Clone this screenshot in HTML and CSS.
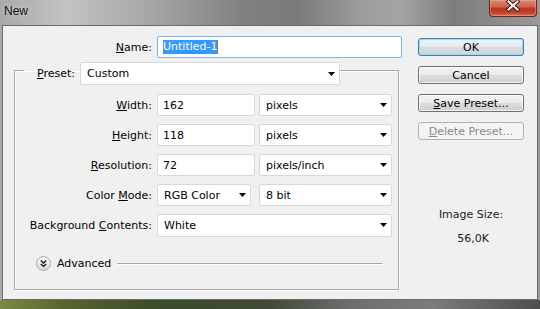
FILE: index.html
```html
<!DOCTYPE html>
<html>
<head>
<meta charset="utf-8">
<title>New</title>
<link rel="stylesheet" href="styles.css">
</head>
<body>
<div class="window">
  <div class="titlebar">
    <span class="title">New</span>
    <div class="close">
      <svg width="48" height="17" viewBox="0 0 48 17">
        <path d="M19.5 2.5 L28.5 10.5 M28.5 2.5 L19.5 10.5" stroke="#3b1710" stroke-width="4" stroke-linecap="square" fill="none"/>
        <path d="M19.5 2.5 L28.5 10.5 M28.5 2.5 L19.5 10.5" stroke="#ffffff" stroke-width="2" stroke-linecap="square" fill="none"/>
      </svg>
    </div>
  </div>
  <div class="client">
    <div class="form">
      <div class="row name-row">
        <span class="lbl name-lbl"><u>N</u>ame:</span>
        <div class="field name-field"><span class="sel">Untitled-1</span><span class="caret"></span></div>
      </div>
      <fieldset class="group">
        <legend class="legend">
          <span class="plbl"><u>P</u>reset:</span>
          <div class="dd preset"><span>Custom</span><svg class="arr" width="7" height="4" viewBox="0 0 7 4"><polygon points="0,0 7,0 3.5,4" fill="#000"/></svg></div>
        </legend>
        <div class="rows">
          <div class="row">
            <span class="lbl"><u>W</u>idth:</span>
            <div class="field num">162</div>
            <div class="dd unit"><span>pixels</span><svg class="arr" width="7" height="4" viewBox="0 0 7 4"><polygon points="0,0 7,0 3.5,4" fill="#000"/></svg></div>
          </div>
          <div class="row">
            <span class="lbl"><u>H</u>eight:</span>
            <div class="field num">118</div>
            <div class="dd unit"><span>pixels</span><svg class="arr" width="7" height="4" viewBox="0 0 7 4"><polygon points="0,0 7,0 3.5,4" fill="#000"/></svg></div>
          </div>
          <div class="row">
            <span class="lbl"><u>R</u>esolution:</span>
            <div class="field num">72</div>
            <div class="dd unit"><span>pixels/inch</span><svg class="arr" width="7" height="4" viewBox="0 0 7 4"><polygon points="0,0 7,0 3.5,4" fill="#000"/></svg></div>
          </div>
          <div class="row">
            <span class="lbl">Color <u>M</u>ode:</span>
            <div class="dd mode"><span>RGB Color</span><svg class="arr" width="7" height="4" viewBox="0 0 7 4"><polygon points="0,0 7,0 3.5,4" fill="#000"/></svg></div>
            <div class="dd unit bits"><span>8 bit</span><svg class="arr" width="7" height="4" viewBox="0 0 7 4"><polygon points="0,0 7,0 3.5,4" fill="#000"/></svg></div>
          </div>
          <div class="row">
            <span class="lbl">Background <u>C</u>ontents:</span>
            <div class="dd bg"><span>White</span><svg class="arr" width="7" height="4" viewBox="0 0 7 4"><polygon points="0,0 7,0 3.5,4" fill="#000"/></svg></div>
          </div>
        </div>
        <div class="adv">
          <svg class="adv-icon" width="15" height="15" viewBox="0 0 15 15">
            <defs>
              <linearGradient id="ag" x1="0" y1="0" x2="0" y2="1">
                <stop offset="0" stop-color="#ffffff"/>
                <stop offset="1" stop-color="#d6d6d6"/>
              </linearGradient>
            </defs>
            <circle cx="7.5" cy="7.5" r="7" fill="url(#ag)" stroke="#a9a9a9"/>
            <path d="M4.8 4.6 L7.5 7.1 L10.2 4.6 M4.8 7.9 L7.5 10.4 L10.2 7.9" stroke="#1a1a1a" stroke-width="1.4" fill="none"/>
          </svg>
          <span class="adv-text">Advanced</span>
          <span class="adv-line"></span>
        </div>
      </fieldset>
    </div>
    <div class="side">
      <div class="btn ok">OK</div>
      <div class="btn">Cancel</div>
      <div class="btn"><span><u>S</u>ave Preset...</span></div>
      <div class="btn disabled"><span><u>D</u>elete Preset...</span></div>
      <div class="info">
        <div class="info-label">Image Size:</div>
        <div class="info-value">56,0K</div>
      </div>
    </div>
  </div>
</div>
</body>
</html>
```

FILE: styles.css
```css
html, body {
  margin: 0;
  padding: 0;
}

body {
  width: 540px;
  height: 309px;
  overflow: hidden;
  font-family: "DejaVu Sans", sans-serif;
  font-size: 11px;
  color: #000;
  background: linear-gradient(to right, #7a8a40 0%, #56652e 12%, #3b4a2a 30%, #414b38 50%, #6e6e6e 65%, #7c7c7c 80%, #4e4e4e 100%);
}

.window {
  height: 300px;
  display: flex;
  flex-direction: column;
  background: linear-gradient(to right, #a9a9a9 0%, #c3c3c3 12%, #a6a6a6 28%, #818181 45%, #7a7a7a 55%, #9a9a9a 66%, #a5a5a5 74%, #7d7d7d 84%, #8b8b8b 92%, #9a9a9a 100%);
}

.titlebar {
  height: 25px;
  display: flex;
  align-items: flex-start;
  flex-shrink: 0;
}

.title {
  font-family: "Liberation Sans", sans-serif;
  font-size: 12px;
  line-height: 14px;
  padding: 4px 0 0 4px;
  color: #111;
  text-shadow: 0 0 6px rgba(255, 255, 255, 0.6);
}

.close {
  margin-left: auto;
  margin-right: 3px;
  width: 48px;
  height: 17px;
  box-sizing: border-box;
  border: 1px solid #6e2518;
  border-top: none;
  border-radius: 0 0 4px 4px;
  background: linear-gradient(#d88a79 0%, #cc6652 40%, #bb3520 55%, #c0432b 80%, #d9745a 100%);
  box-shadow: inset 0 0 0 1px rgba(255, 200, 190, 0.35);
  overflow: hidden;
}

.close svg {
  display: block;
  margin: -1px 0 0 -1px;
}

.client {
  flex: 1;
  margin: 0 2px;
  border: 1px solid #6a6a6a;
  background: #f0f0f0;
  display: flex;
  align-items: flex-start;
}

.form {
  width: 399px;
  flex-shrink: 0;
}

.row {
  display: flex;
  align-items: center;
  height: 22px;
}

.lbl {
  width: 137px;
  margin-right: 5px;
  text-align: right;
  white-space: nowrap;
}

.name-row {
  margin-top: 10px;
}

.name-lbl {
  width: 149px;
}

.field {
  height: 22px;
  box-sizing: border-box;
  border: 1px solid #d8d8d8;
  border-radius: 2px;
  background: #fff;
  display: flex;
  align-items: center;
  padding-left: 5px;
}

.name-field {
  width: 245px;
  border-color: #7eb4ea;
}

.sel {
  background: #3399ff;
  color: #fff;
  line-height: 14px;
}

.caret {
  width: 1px;
  height: 14px;
  background: #c46a1e;
}

.num {
  width: 98px;
  margin-right: 4px;
}

.dd {
  height: 22px;
  box-sizing: border-box;
  border: 1px solid #d8d8d8;
  border-radius: 2px;
  background: #fff;
  display: flex;
  align-items: center;
  justify-content: space-between;
  padding: 0 4px 0 6px;
}

.arr {
  display: block;
  flex-shrink: 0;
}

.unit {
  width: 133px;
}

.mode {
  width: 94px;
  margin-right: 8px;
}

.bg {
  width: 235px;
  height: 23px;
}

.group {
  margin: -2px 0 0 11px;
  padding: 9px 0 18px 0;
  width: 385px;
  box-sizing: border-box;
  min-width: 0;
  border: 1px solid #a6a6a6;
  box-shadow: 1px 1px 0 #ffffff, inset 1px 1px 0 #ffffff;
}

.legend {
  margin-left: 9px;
  padding: 6px 0 0 13px;
  display: flex;
  align-items: center;
}

.plbl {
  width: 43px;
  white-space: nowrap;
}

.preset {
  width: 260px;
  height: 23px;
}

.rows {
  display: flex;
  flex-direction: column;
  gap: 8px;
}

.adv {
  margin-top: 19px;
  height: 16px;
  display: flex;
  align-items: center;
}

.adv-icon {
  display: block;
  margin-left: 21px;
  flex-shrink: 0;
}

.adv-text {
  margin-left: 6px;
}

.adv-line {
  flex: 1;
  margin: 0 16px 0 6px;
  height: 1px;
  background: #a6a6a6;
  box-shadow: 0 1px 0 #ffffff;
}

.side {
  width: 106px;
  margin-left: 16px;
  padding-top: 12px;
  display: flex;
  flex-direction: column;
  gap: 10px;
}

.btn {
  height: 18px;
  box-sizing: border-box;
  border: 1px solid #707070;
  border-radius: 3px;
  background: linear-gradient(#f2f2f2 0%, #ebebeb 50%, #dddddd 50%, #cfcfcf 100%);
  box-shadow: inset 0 0 0 1px rgba(255, 255, 255, 0.75);
  display: flex;
  align-items: center;
  justify-content: center;
  white-space: nowrap;
}

.btn.ok {
  border-color: #3c7fb1;
  box-shadow: inset 0 0 0 1px #9ed8f5;
  background: linear-gradient(#eef3f6 0%, #e4eaee 50%, #d5dde2 50%, #cdd6dc 100%);
}

.btn.disabled {
  border-color: #adb2b5;
  background: #f4f4f4;
  box-shadow: none;
  color: #8a8a8a;
}

.info {
  margin-top: 58px;
  text-align: center;
  line-height: 13px;
  color: #1a1a1a;
}

.info-value {
  margin-top: 11px;
  padding-left: 4px;
}
```
